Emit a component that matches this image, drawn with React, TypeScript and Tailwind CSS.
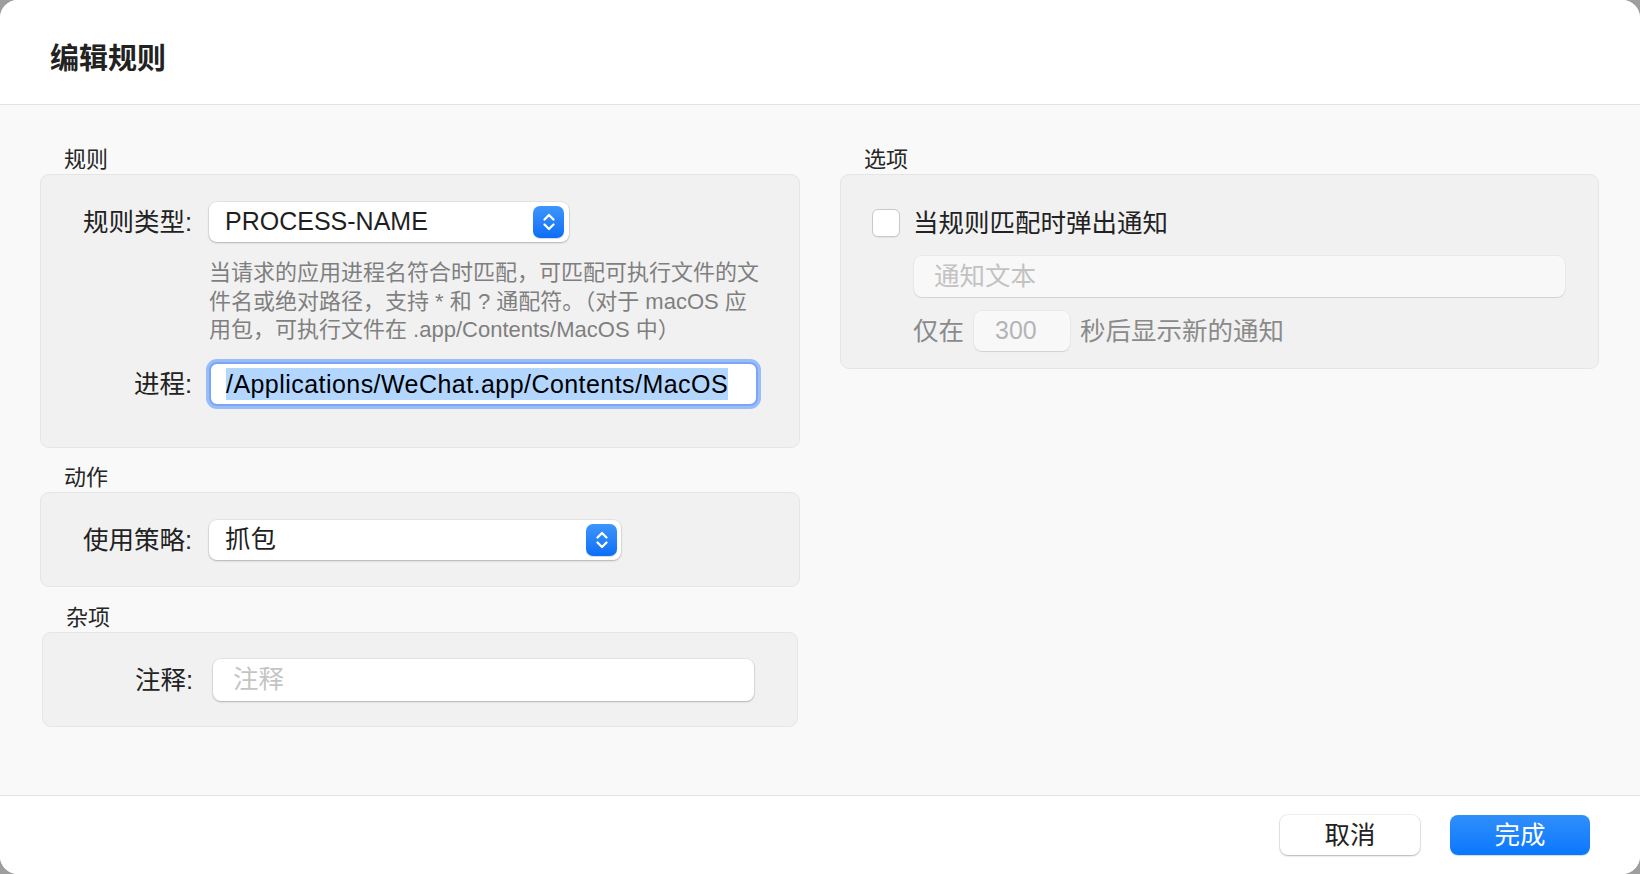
import React from "react";

const Stepper: React.FC = () => (
  <div className="w-[31px] h-[32px] rounded-[7px] bg-gradient-to-b from-[#3e95fc] to-[#0a6ef6] flex items-center justify-center shadow-[0_1px_1px_rgba(0,0,0,0.15)]">
    <svg width="16" height="24" viewBox="0 0 16 24" fill="none">
      <path d="M3.5 9.5 L8 5 L12.5 9.5" stroke="white" strokeWidth="2.3" strokeLinecap="round" strokeLinejoin="round" />
      <path d="M3.5 14.5 L8 19 L12.5 14.5" stroke="white" strokeWidth="2.3" strokeLinecap="round" strokeLinejoin="round" />
    </svg>
  </div>
);

const SectionLabel: React.FC<{ children: React.ReactNode; className?: string }> = ({ children, className = "" }) => (
  <div className={`h-[24px] leading-[24px] text-[22px] text-[#262626] ${className}`}>{children}</div>
);

const FieldLabel: React.FC<{ children: React.ReactNode; className?: string }> = ({ children, className = "" }) => (
  <div className={`text-right text-[25.5px] leading-[30px] text-[#222] ${className}`}>{children}</div>
);

const App: React.FC = () => {
  const boxBase = "bg-[#f1f1f1] border border-[#e5e5e5] rounded-[9px]";
  const popup =
    "bg-white rounded-[8px] shadow-[0_0_0_1px_rgba(0,0,0,0.05),0_1px_2px_rgba(0,0,0,0.22)] flex items-center";

  return (
    <div className="w-[1640px] h-[874px] bg-[#9e9e9e] font-['Liberation_Sans','Noto_Sans_CJK_SC',sans-serif]">
      <div className="w-full h-full rounded-[18px] overflow-hidden flex flex-col bg-[#f9f9f9]">
        {/* Header */}
        <div className="h-[105px] shrink-0 bg-white border-b border-[#e4e4e4] flex items-center pl-[50px] pt-[14px]">
          <h1 className="text-[29px] font-bold text-[#222] leading-none">编辑规则</h1>
        </div>

        {/* Body */}
        <div className="flex-1 flex gap-[40px] pl-[40px] pr-[41px] pt-[43px]">
          {/* Left column */}
          <div className="w-[760px] flex flex-col">
            <SectionLabel className="ml-[24px] mb-[2px]">规则</SectionLabel>
            <div className={`${boxBase} h-[274px] pt-[27px]`}>
              <div className="flex items-center">
                <FieldLabel className="w-[151px]">规则类型:</FieldLabel>
                <div className={`${popup} ml-[17px] w-[360px] h-[40px] pl-[16px] pr-[5px] justify-between`}>
                  <span className="text-[25px] text-[#1f1f1f]">PROCESS-NAME</span>
                  <Stepper />
                </div>
              </div>
              <div className="ml-[168px] mt-[17px] text-[22px] leading-[28.5px] text-[#7f7f7f] whitespace-nowrap">
                <div>当请求的应用进程名符合时匹配，可匹配可执行文件的文</div>
                <div>件名或绝对路径，支持 * 和 ? 通配符。（对于 macOS 应</div>
                <div>用包，可执行文件在 .app/Contents/MacOS 中）</div>
              </div>
              <div className="flex items-center mt-[17px]">
                <FieldLabel className="w-[151px]">进程:</FieldLabel>
                <div className="ml-[17px] w-[549px] h-[44px] bg-white rounded-[8px] border-2 border-[#7aa6f3] shadow-[0_0_0_3px_#98bdf8] pl-[15px] flex items-center">
                  <span className="bg-[#b3d6fe] text-[25px] leading-[32px] tracking-[0.45px] text-black whitespace-nowrap">
                    /Applications/WeChat.app/Contents/MacOS
                  </span>
                </div>
              </div>
            </div>

            <SectionLabel className="ml-[24px] mt-[18px] mb-[2px]">动作</SectionLabel>
            <div className={`${boxBase} h-[95px] flex items-center`}>
              <FieldLabel className="w-[151px]">使用策略:</FieldLabel>
              <div className={`${popup} ml-[17px] w-[412px] h-[40px] pl-[16px] pr-[4px] justify-between`}>
                <span className="text-[25.5px] text-[#1f1f1f]">抓包</span>
                <Stepper />
              </div>
            </div>

            <SectionLabel className="ml-[26px] mt-[19px] mb-[2px]">杂项</SectionLabel>
            <div className={`${boxBase} mx-[2px] h-[95px] flex items-center`}>
              <FieldLabel className="w-[150px]">注释:</FieldLabel>
              <div className={`${popup} ml-[20px] w-[541px] h-[42px] pl-[20px]`}>
                <span className="text-[25.5px] text-[#c4c4c4]">注释</span>
              </div>
            </div>
          </div>

          {/* Right column */}
          <div className="flex-1 flex flex-col">
            <SectionLabel className="ml-[24px] mb-[2px]">选项</SectionLabel>
            <div className={`${boxBase} h-[195px] pl-[31px] pr-[33px] pt-[33px]`}>
              <div className="flex items-center">
                <div className="w-[28px] h-[28px] rounded-[6px] bg-white border border-[#c9c9c9] shadow-[0_1px_1px_rgba(0,0,0,0.06)]" />
                <span className="ml-[13px] text-[25.5px] leading-[30px] text-[#222]">当规则匹配时弹出通知</span>
              </div>
              <div className="ml-[42px] mt-[18px] h-[41px] rounded-[8px] bg-[#f8f8f8] shadow-[0_0_0_1px_rgba(0,0,0,0.03),0_1px_1px_rgba(0,0,0,0.1)] flex items-center pl-[20px]">
                <span className="text-[25.5px] text-[#c2c2c2]">通知文本</span>
              </div>
              <div className="ml-[41px] mt-[14px] flex items-center">
                <span className="text-[25.5px] text-[#8a8a8a]">仅在</span>
                <div className="ml-[10px] w-[96px] h-[40px] rounded-[8px] bg-[#f8f8f8] shadow-[0_0_0_1px_rgba(0,0,0,0.03),0_1px_1px_rgba(0,0,0,0.1)] flex items-center pl-[21px]">
                  <span className="text-[25px] text-[#b5b5b5]">300</span>
                </div>
                <span className="ml-[10px] text-[25.5px] text-[#8a8a8a]">秒后显示新的通知</span>
              </div>
            </div>
          </div>
        </div>

        {/* Footer */}
        <div className="h-[79px] shrink-0 bg-white border-t border-[#e4e4e4] flex items-center justify-end pr-[50px] gap-[30px]">
          <button className="w-[140px] h-[40px] rounded-[8px] bg-white shadow-[0_0_0_1px_rgba(0,0,0,0.06),0_1px_2px_rgba(0,0,0,0.25)] text-[25.5px] text-[#222]">
            取消
          </button>
          <button className="w-[140px] h-[40px] rounded-[8px] bg-gradient-to-b from-[#2f8ffb] to-[#0777fd] shadow-[0_1px_1px_rgba(0,0,0,0.15)] text-[25.5px] text-white">
            完成
          </button>
        </div>
      </div>
    </div>
  );
};

export default App;
